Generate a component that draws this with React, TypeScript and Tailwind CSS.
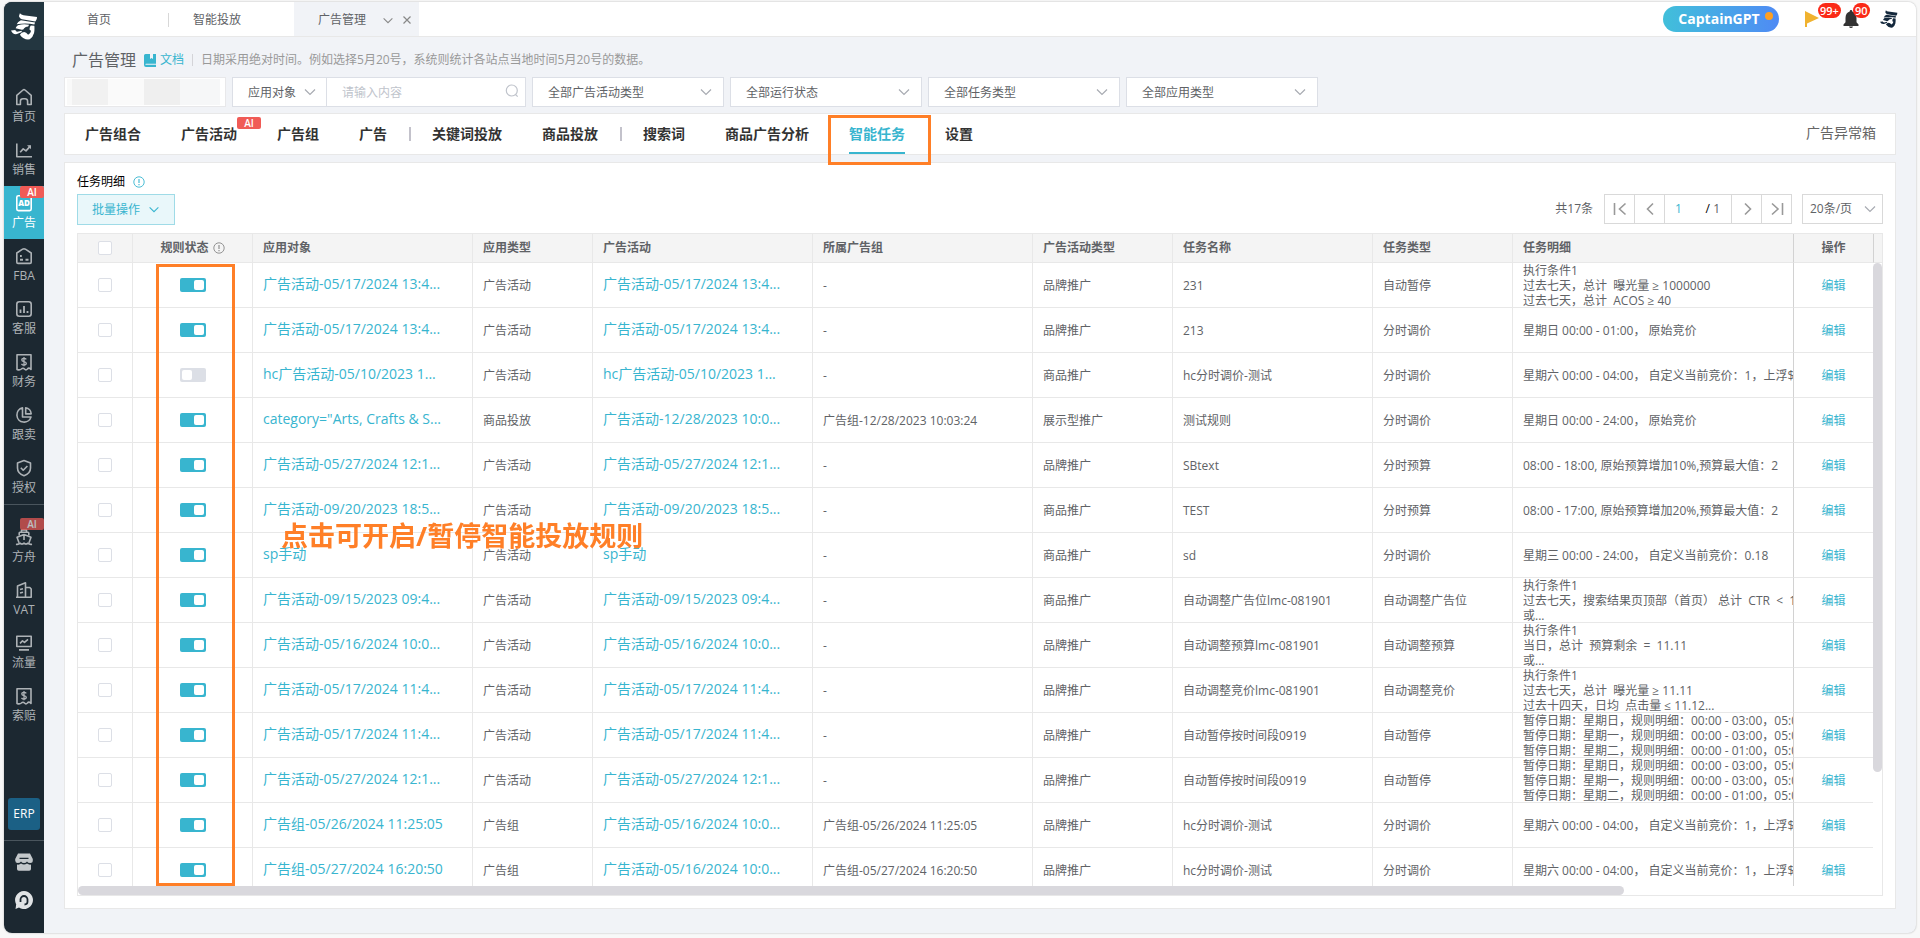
import { useState } from "react";
import type { ReactNode } from "react";
import clsx from "clsx";

interface TaskRow {
  enabled: boolean;
  target: string;
  targetType: string;
  campaign: string;
  adGroup: string;
  campaignType: string;
  taskName: string;
  taskType: string;
  details: string[];
}

const CONDITION = "执行条件1";

const PAUSE_DETAILS = [
  "暂停日期：星期日，规则明细：00:00 - 03:00，05:0",
  "暂停日期：星期一，规则明细：00:00 - 03:00，05:0",
  "暂停日期：星期二，规则明细：00:00 - 01:00，05:0",
];

const SATURDAY_DETAILS = ["星期六 00:00 - 04:00， 自定义当前竞价：1，上浮$1"];

function makeRow(
  target: string,
  targetType: string,
  campaign: string,
  adGroup: string,
  campaignType: string,
  taskName: string,
  taskType: string,
  details: string[],
  enabled = true,
): TaskRow {
  return { enabled, target, targetType, campaign, adGroup, campaignType, taskName, taskType, details };
}

const initialRows: TaskRow[] = [
  makeRow("广告活动-05/17/2024 13:4...", "广告活动", "广告活动-05/17/2024 13:4...", "-", "品牌推广", "231", "自动暂停", [
    CONDITION,
    "过去七天，总计  曝光量 ≥ 1000000",
    "过去七天，总计  ACOS ≥ 40",
  ]),
  makeRow("广告活动-05/17/2024 13:4...", "广告活动", "广告活动-05/17/2024 13:4...", "-", "品牌推广", "213", "分时调价", [
    "星期日 00:00 - 01:00， 原始竞价",
  ]),
  makeRow("hc广告活动-05/10/2023 1...", "广告活动", "hc广告活动-05/10/2023 1...", "-", "商品推广", "hc分时调价-测试", "分时调价", SATURDAY_DETAILS, false),
  makeRow('category="Arts, Crafts & S...', "商品投放", "广告活动-12/28/2023 10:0...", "广告组-12/28/2023 10:03:24", "展示型推广", "测试规则", "分时调价", [
    "星期日 00:00 - 24:00， 原始竞价",
  ]),
  makeRow("广告活动-05/27/2024 12:1...", "广告活动", "广告活动-05/27/2024 12:1...", "-", "品牌推广", "SBtext", "分时预算", [
    "08:00 - 18:00, 原始预算增加10%,预算最大值：2",
  ]),
  makeRow("广告活动-09/20/2023 18:5...", "广告活动", "广告活动-09/20/2023 18:5...", "-", "商品推广", "TEST", "分时预算", [
    "08:00 - 17:00, 原始预算增加20%,预算最大值：2",
  ]),
  makeRow("sp手动", "广告活动", "sp手动", "-", "商品推广", "sd", "分时调价", [
    "星期三 00:00 - 24:00， 自定义当前竞价：0.18",
  ]),
  makeRow("广告活动-09/15/2023 09:4...", "广告活动", "广告活动-09/15/2023 09:4...", "-", "商品推广", "自动调整广告位lmc-081901", "自动调整广告位", [
    CONDITION,
    "过去七天，搜索结果页顶部（首页） 总计  CTR  <  11.11%",
    "或...",
  ]),
  makeRow("广告活动-05/16/2024 10:0...", "广告活动", "广告活动-05/16/2024 10:0...", "-", "品牌推广", "自动调整预算lmc-081901", "自动调整预算", [
    CONDITION,
    "当日，总计  预算剩余  =  11.11",
    "或...",
  ]),
  makeRow("广告活动-05/17/2024 11:4...", "广告活动", "广告活动-05/17/2024 11:4...", "-", "品牌推广", "自动调整竞价lmc-081901", "自动调整竞价", [
    CONDITION,
    "过去七天，总计  曝光量 ≥ 11.11",
    "过去十四天，日均  点击量 ≤ 11.12...",
  ]),
  makeRow("广告活动-05/17/2024 11:4...", "广告活动", "广告活动-05/17/2024 11:4...", "-", "品牌推广", "自动暂停按时间段0919", "自动暂停", PAUSE_DETAILS),
  makeRow("广告活动-05/27/2024 12:1...", "广告活动", "广告活动-05/27/2024 12:1...", "-", "品牌推广", "自动暂停按时间段0919", "自动暂停", PAUSE_DETAILS),
  makeRow("广告组-05/26/2024 11:25:05", "广告组", "广告活动-05/16/2024 10:0...", "广告组-05/26/2024 11:25:05", "品牌推广", "hc分时调价-测试", "分时调价", SATURDAY_DETAILS),
  makeRow("广告组-05/27/2024 16:20:50", "广告组", "广告活动-05/16/2024 10:0...", "广告组-05/27/2024 16:20:50", "品牌推广", "hc分时调价-测试", "分时调价", SATURDAY_DETAILS),
];

function Icon({ children }: { children: ReactNode }) {
  return (
    <svg
      viewBox="0 0 18 18"
      className="h-[18px] w-[18px]"
      fill="none"
      stroke="currentColor"
      strokeWidth="1.6"
      strokeLinejoin="round"
    >
      {children}
    </svg>
  );
}

const receipt = (
  <Icon>
    <path d="M2 1.8h14v14.6c-1.4-1.6-2.6-1.6-3.6-.4-1 1.1-1.9 1.1-2.9 0s-2.1-1.1-3.1 0c-1.3 1.1-2.6 1.1-4.4.4z" />
    <path
      d="M11.3 6.4C10.8 5.6 10 5.3 9 5.3c-1.3 0-2.2.6-2.2 1.6 0 2.3 4.5 1 4.5 3.4 0 1-.9 1.7-2.3 1.7-1.2 0-2-.4-2.500-1.2M9 4v9.300"
      strokeWidth="1.3"
    />
  </Icon>
);

const sideItems: { label: string; icon: ReactNode; badge?: boolean }[] = [
  {
    label: "首页",
    icon: (
      <Icon>
        <path d="M1.8 7.4 8 2q1-.8 2 0l6.2 5.4v9.1h-3.6v-3.3a2.5 2.5 0 0 0-2.5-2.5H7.9a2.5 2.5 0 0 0-2.5 2.5v3.3H1.8z" />
      </Icon>
    ),
  },
  {
    label: "销售",
    icon: (
      <Icon>
        <path d="M1.8 2.500v13.2H17M5.2 11.3l3-3.4 2.8 2 4.5-5" />
        <path d="M12 4.2h4v4z" fill="currentColor" stroke="none" />
      </Icon>
    ),
  },
  {
    label: "广告",
    badge: true,
    icon: (
      <Icon>
        <rect x="1.8" y="1.8" width="14.4" height="14.8" rx="1.5" />
        <text
          x="9"
          y="12.4"
          textAnchor="middle"
          fill="currentColor"
          stroke="none"
          fontSize="8"
          fontWeight="800"
          fontFamily="Open Sans, sans-serif"
        >
          AD
        </text>
      </Icon>
    ),
  },
  {
    label: "FBA",
    icon: (
      <Icon>
        <path d="M1.8 6 7.6 2.2q1.4-.8 2.8 0L16.2 6v9.200q0 1.200-1.200 1.200H3q-1.200 0-1.200-1.200z" />
        <path d="M5 9h1.800M5 12.700h3M10.500 12.700h3" strokeWidth="2" />
      </Icon>
    ),
  },
  {
    label: "客服",
    icon: (
      <Icon>
        <rect x="1.8" y="1.8" width="14.4" height="14.4" rx="2.5" />
        <path d="M5.5 9.5V13M9 6v7M12.5 11v2" strokeWidth="1.8" />
      </Icon>
    ),
  },
  { label: "财务", icon: receipt },
  {
    label: "跟卖",
    icon: (
      <Icon>
        <path d="M7.5 1.9A7.2 7.2 0 1 0 16 11H7.5z" />
        <path d="M10.7 1.9a6.3 6.3 0 0 1 5.5 6h-5.500z" />
      </Icon>
    ),
  },
  {
    label: "授权",
    icon: (
      <Icon>
        <path d="M9 1.5 15.5 4v5c0 4-3 6.5-6.5 7.8C5.5 15.5 2.5 13 2.5 9V4z" />
        <path d="m5.8 8.8 2.4 2.4 4.2-4.2" />
      </Icon>
    ),
  },
  {
    label: "方舟",
    badge: true,
    icon: (
      <Icon>
        <path d="M4.2 7.5V5q0-.8.8-.8h8q.8 0 .8.800v2.500M6.500 4V2h5v2" />
        <path d="M9 6.500 2 9.300l2 5.500M9 6.500l7 2.800-2 5.500M9 6.800V12" />
        <path d="M1 16.200q2.200.6 4-1 2 1.800 4 0 2 1.800 4 0 1.800 1.600 4 1" />
      </Icon>
    ),
  },
  {
    label: "VAT",
    icon: (
      <Icon>
        <path d="M2.5 16.2V5l8-3.2v14.400M10.500 6.500h4.300l1.400 1.500v8.200H1M5 8.500l3-.8M5 12l3-.8" />
      </Icon>
    ),
  },
  {
    label: "流量",
    icon: (
      <Icon>
        <path d="M1.8 2.300h14.400v10.200H1.800zM4 15.900h10" />
        <path d="m5 9.300 2.500-2.400 2 1.500L13 5.300" />
      </Icon>
    ),
  },
  { label: "索赔", icon: receipt },
];

// captain's head in profile: peaked cap, pipe and beard
function CaptainLogo({ className }: { className?: string }) {
  return (
    <svg viewBox="8 7 82 82" className={className} fill="currentColor">
      <path d="M35 8q4 5 11 6l41 5q1 7-5 14L41 26q-6-2-9-9z" />
      <path d="M38 29l43 7-2 6q-24-6-54-1 4-8 13-12z" />
      <path d="M29 44q18-5 34-1l-3 5q-8 0-12 5-2 5-7 5l-19-5q1-5 7-9z" />
      <path d="M8 60l13-1q2 5 6 5l13-3 1 4-15 6q-13 2-18-11z" />
      <path d="M68 45l11 1q1 12-1 22-3 12-13 19-18 3-30-14 4-8 13-8 6 0 12 8 8-4 9-12l-4-2q-2-7 3-14z" />
    </svg>
  );
}

function Chevron({ className }: { className?: string }) {
  return (
    <svg
      viewBox="0 0 12 8"
      className={clsx("pointer-events-none h-2 w-3", className)}
      fill="none"
      stroke="currentColor"
      strokeWidth="1.2"
    >
      <path d="M1 1.5 6 6.5l5-5" />
    </svg>
  );
}

function InfoIcon({ className }: { className?: string }) {
  return (
    <svg viewBox="0 0 12 12" className={clsx("h-3 w-3", className)} fill="none" stroke="currentColor">
      <circle cx="6" cy="6" r="5.2" strokeWidth="0.9" />
      <path d="M6 3v4M6 8v1.2" strokeWidth="1.1" />
    </svg>
  );
}

function AiBadge({ className }: { className?: string }) {
  return (
    <span
      className={clsx(
        "absolute flex h-3 w-6 items-center justify-center rounded-[2px] bg-[#f05b56] text-[10px] leading-3 font-semibold text-white",
        className,
      )}
    >
      AI
    </span>
  );
}

function FilterSelect({ label }: { label: string }) {
  return (
    <div className="relative w-48">
      <select
        aria-label={label}
        className="h-[30px] w-full appearance-none border border-[#dcdfe6] bg-white pt-0.5 pr-8 pl-[15px] text-xs text-[#606266] outline-none"
      >
        <option>{label}</option>
      </select>
      <Chevron className="absolute top-[11px] right-3 text-[#a8abb2]" />
    </div>
  );
}

function SideNav() {
  return (
    <aside className="flex w-10 shrink-0 flex-col bg-[#1c2831] text-[#adb2b6]">
      <div className="flex h-12 shrink-0 items-center justify-center bg-[#233640] text-white">
        <CaptainLogo className="h-[27px] w-[27px]" />
      </div>
      <nav className="pt-[30px]">
        {sideItems.map(({ label, icon, badge }, index) => (
          <a
            key={label}
            href="#"
            className={clsx(
              "relative flex h-[53px] flex-col items-center pt-2 text-xs leading-[18px]",
              index === 2 && "bg-[#38b5cf] text-white",
              index === 8 && "mt-4",
            )}
          >
            {index === 8 && <span className="absolute inset-x-0 -top-4 h-px bg-[#4a555d]" />}
            {icon}
            <span className="mt-0.5">{label}</span>
            {badge && <AiBadge className={clsx("right-0", index === 2 ? "top-0" : "-top-0.5 opacity-70")} />}
          </a>
        ))}
      </nav>
      <div className="mt-auto flex flex-col items-center pb-6">
        <a href="#" className="flex h-8 w-8 items-center justify-center rounded-[3px] bg-[#1b6085] text-xs text-white">
          ERP
        </a>
        <span className="mt-2.5 h-px w-full bg-[#4a555d]" />
        <a href="#" aria-label="店铺" className="mt-3 text-[#c3c8cb]">
          <svg viewBox="0 0 18 18" className="h-[18px] w-[18px]" fill="currentColor">
            <path d="M3 .5h12l2.800 5.500v1.500q0 2.500-2.500 2.500T12 8.500Q11 10 9 10T6 8.500Q5 10 2.700 10T.2 7.500V6z" />
            <path d="M2 11.500q2.500.5 4-1 3 2 6 0 2 1.500 4 1V16q0 1.800-1.800 1.800H3.800Q2 17.800 2 16z" />
            <path d="M4.500 5.300h9" stroke="#1c2831" strokeWidth="1.2" />
          </svg>
        </a>
        <a href="#" aria-label="在线客服" className="mt-5 text-[#e0e3e5]">
          <svg viewBox="0 0 18 18" className="h-[18px] w-[18px]">
            <path d="M9 0a9 9 0 1 1-5 16.500L.5 18l.7-4.600A9 9 0 0 1 9 0z" fill="currentColor" />
            <path d="M5.500 11V8.500a3.500 3.500 0 0 1 7 0V11q-.2 2.500-3 2.500" fill="none" stroke="#1c2831" strokeWidth="1.8" />
          </svg>
        </a>
      </div>
    </aside>
  );
}

function TopBar() {
  return (
    <header className="flex h-[35px] shrink-0 items-stretch justify-between border-b border-[#e8e8e8] bg-white text-xs text-[#606266]">
      <div className="flex">
        <a href="#" className="flex w-[125px] items-center pt-0.5 pl-[43px]">
          首页
          <span className="ml-auto h-3.5 w-px bg-[#d8d8d8]" />
        </a>
        <a href="#" className="flex w-[125px] items-center pt-0.5 pl-6">
          智能投放
        </a>
        <div className="flex w-[125px] items-center bg-[#f1f3f7] pt-0.5 pl-6">
          广告管理
          <Chevron className="ml-4 h-[7px] w-2.5 text-[#888]" />
          <button type="button" aria-label="关闭" className="ml-2">
            <svg viewBox="0 0 10 10" className="h-2.5 w-2.5" stroke="#888" strokeWidth="1.2">
              <path d="m1.500 1.500 7 7M8.500 1.500l-7 7" />
            </svg>
          </button>
        </div>
      </div>
      <div className="flex items-center pr-[18px]">
        <button
          type="button"
          className="relative mr-[26px] h-[26px] w-[116px] rounded-full bg-linear-to-r from-[#41bfda] to-[#4f8af4] pr-1 text-sm font-bold text-white"
        >
          CaptainGPT
          <span className="absolute top-1.5 right-1.5 h-2 w-2 rounded-full bg-[#ff9f20]" />
        </button>
        <button type="button" aria-label="标记" className="relative mr-6">
          <svg viewBox="0 0 14 16" className="h-4 w-3.5" fill="#f0b22f">
            <path d="M0 0l14 7L2 12.500V16H0z" />
          </svg>
          <span className="absolute -top-2 left-[13px] rounded-full bg-[#fb2a17] px-0.5 text-[11px] leading-[15px] font-semibold text-white">
            99+
          </span>
        </button>
        <button type="button" aria-label="通知" className="relative mr-[21px]">
          <svg viewBox="0 0 16 18" className="h-[18px] w-4" fill="#333">
            <path d="M8 0q1.300 0 1.300 1.400Q13.500 2.700 13.500 8v4.200l2 2.300V16H.5v-1.500l2-2.300V8q0-5.300 4.200-6.600Q6.700 0 8 0zM6 16.500h4Q9.600 18 8 18t-2-1.500z" />
          </svg>
          <span className="absolute -top-[7px] left-2.5 rounded-full bg-[#fb2a17] px-0.5 text-[11px] leading-[15px] font-semibold text-white">
            90
          </span>
        </button>
        <CaptainLogo className="h-[18px] w-[18px] text-[#14283c]" />
      </div>
    </header>
  );
}

function Filters() {
  return (
    <div className="flex gap-1.5">
      <button
        type="button"
        aria-label="店铺选择"
        className="flex h-[30px] w-[162px] border border-[#e8e8ea] bg-white py-px pr-[5px] pl-0.5"
      >
        <span className="h-full w-[5px] bg-[#f9f9f9]" />
        <span className="h-full w-9 bg-[#f1f1f1]" />
        <span className="h-full w-9 bg-[#fafafa]" />
        <span className="h-full w-9 bg-[#efefef]" />
        <span className="h-full flex-1 bg-[#f6f7f8]" />
      </button>
      <div className="flex h-[30px] w-[294px] border border-[#dcdfe6] bg-white">
        <div className="relative w-[94px] border-r border-[#dcdfe6]">
          <select
            aria-label="搜索字段"
            className="h-full w-full appearance-none bg-white pt-0.5 pl-[15px] text-xs text-[#606266] outline-none"
          >
            <option>应用对象</option>
          </select>
          <Chevron className="absolute top-2.5 right-2.5 text-[#a8abb2]" />
        </div>
        <input
          type="text"
          aria-label="搜索内容"
          placeholder="请输入内容"
          className="min-w-0 flex-1 pt-0.5 pr-4 pl-[15px] text-xs outline-none placeholder:text-[#c0c4cc]"
        />
        <svg
          viewBox="0 0 14 14"
          className="mt-1.5 mr-1.5 h-3.5 w-3.5"
          fill="none"
          stroke="#bfc3cb"
          strokeWidth="1.2"
        >
          <circle cx="6.8" cy="6.5" r="5.5" />
          <path d="m10.500 10.500 2.200 2.200" />
        </svg>
      </div>
      <FilterSelect label="全部广告活动类型" />
      <FilterSelect label="全部运行状态" />
      <FilterSelect label="全部任务类型" />
      <FilterSelect label="全部应用类型" />
    </div>
  );
}

const tabs = [
  "广告组合",
  "广告活动",
  "广告组",
  "广告",
  "|",
  "关键词投放",
  "商品投放",
  "|",
  "搜索词",
  "商品广告分析",
  "智能任务",
  "设置",
];

function AdTabs() {
  return (
    <div className="mt-1.5 flex h-[42px] items-stretch border border-[#e8e8e8] bg-white text-sm">
      {tabs.map((tab, index) =>
        tab === "|" ? (
          <span key={index} className="flex w-[5px] items-center justify-center">
            <span className="h-3.5 w-0.5 bg-[#c3c2cb]" />
          </span>
        ) : (
          <button key={tab} type="button" className="relative px-5 font-bold text-[#333]">
            <span
              className={clsx(
                "flex h-full items-center",
                tab === "智能任务" && "border-b-2 border-[#38b5cf] pt-0.5 text-[#38b5cf]",
              )}
            >
              {tab}
            </span>
            {tab === "广告活动" && <AiBadge className="top-[3px] -right-1" />}
            {tab === "智能任务" && (
              <span className="absolute top-px -left-px z-10 h-[50px] w-[103px] border-3 border-[#ff7f27]" />
            )}
          </button>
        ),
      )}
      <a href="#" className="ml-auto flex items-center pr-[19px] pb-0.5 text-[#666]">
        广告异常箱
      </a>
    </div>
  );
}

function PagerButton({ label, path }: { label: string; path: string }) {
  return (
    <button
      type="button"
      aria-label={label}
      className="-ml-px flex h-[30px] w-[31px] items-center justify-center border border-[#d9d9d9] bg-white"
    >
      <svg viewBox="0 0 14 14" className="h-3.5 w-3.5" fill="none" stroke="#999" strokeWidth="1.6">
        <path d={path} />
      </svg>
    </button>
  );
}

function Pagination() {
  return (
    <div className="flex items-center text-xs text-[#606266]">
      <span className="mr-3">共17条</span>
      <PagerButton label="首页" path="M1.500 1v12M12.500 1.500 6.500 7l6 5.500" />
      <PagerButton label="上一页" path="M10 1.500 4.500 7l5.500 5.500" />
      <div className="-ml-px flex h-[30px] w-[68px] items-center border border-[#d9d9d9] bg-white">
        <input
          type="text"
          aria-label="页码"
          defaultValue="1"
          className="w-[27px] text-center text-[#38b5cf] outline-none"
        />
        <span className="ml-auto pr-[11px]">
          <span className="text-black">/</span> 1
        </span>
      </div>
      <PagerButton label="下一页" path="M5 1.500 10.500 7 5 12.500" />
      <PagerButton label="末页" path="M2 1.500 8 7l-6 5.500M12.500 1v12" />
      <div className="relative ml-2.5">
        <select
          aria-label="每页条数"
          className="h-[30px] w-[81px] appearance-none border border-[#d9d9d9] bg-white pl-[7px] outline-none"
        >
          <option>20条/页</option>
        </select>
        <Chevron className="absolute top-[11px] right-[7px] text-[#a8abb2]" />
      </div>
    </div>
  );
}

const checkboxClass =
  "block mx-auto h-3.5 w-3.5 appearance-none rounded-[2px] border border-[#dcdfe6] bg-white checked:bg-[#38b5cf]";
const thClass = "sticky top-0 border-r border-b border-[#e8e8e8] bg-[#f4f4f4] px-2.5 text-left font-bold";
const tdClass = "border-r border-b border-[#e8e8e8] px-2.5";
const textTdClass = "border-r border-b border-[#e8e8e8] px-2.5 pt-0.5 whitespace-nowrap";
const linkTdClass = "border-r border-b border-[#e8e8e8] px-2.5 pb-0.5 whitespace-nowrap";
const linkClass = "text-sm text-[#38b5cf]";

function TaskTable() {
  const [rows, setRows] = useState(initialRows);

  const toggleRow = (index: number) => {
    setRows((prev) => prev.map((row, i) => (i === index ? { ...row, enabled: !row.enabled } : row)));
  };

  return (
    <div className="mt-2 flex min-h-0 flex-1 flex-col border border-[#e8e8e8]">
      <div className="flex min-h-0 flex-1">
        <div className="relative min-w-0 flex-1 overflow-hidden">
          <table className="w-[2084px] table-fixed border-separate border-spacing-0 text-xs text-[#606266]">
            <colgroup>
              <col className="w-[55px]" />
              <col className="w-[120px]" />
              <col className="w-[220px]" />
              <col className="w-[120px]" />
              <col className="w-[220px]" />
              <col className="w-[220px]" />
              <col className="w-[140px]" />
              <col className="w-[200px]" />
              <col className="w-[140px]" />
              <col />
              <col className="w-20" />
            </colgroup>
            <thead>
              <tr className="h-[29px]">
                <th className={thClass}>
                  <input type="checkbox" aria-label="全选" className={checkboxClass} />
                </th>
                <th className={thClass}>
                  <span className="flex items-center justify-center gap-1">
                    规则状态
                    <InfoIcon className="text-[#888]" />
                  </span>
                </th>
                <th className={thClass}>应用对象</th>
                <th className={thClass}>应用类型</th>
                <th className={thClass}>广告活动</th>
                <th className={thClass}>所属广告组</th>
                <th className={thClass}>广告活动类型</th>
                <th className={thClass}>任务名称</th>
                <th className={thClass}>任务类型</th>
                <th className={thClass}>任务明细</th>
                <th className="sticky top-0 right-0 border-b border-l border-b-[#e8e8e8] border-l-[#d2d2d2] bg-[#f4f4f4] text-center font-bold">
                  操作
                </th>
              </tr>
            </thead>
            <tbody>
              {rows.map((row, index) => (
                <tr key={index} className="h-[45px] bg-white">
                  <td className={tdClass}>
                    <input type="checkbox" aria-label={`选择 ${row.taskName}`} className={checkboxClass} />
                  </td>
                  <td className={tdClass}>
                    <input
                      type="checkbox"
                      role="switch"
                      aria-label={`启用 ${row.taskName}`}
                      checked={row.enabled}
                      onChange={() => toggleRow(index)}
                      className="relative mx-auto block h-3.5 w-[26px] appearance-none rounded-[2px] bg-[#dcdfe6] before:absolute before:top-0.5 before:left-0.5 before:h-2.5 before:w-2.5 before:rounded-[2px] before:bg-white checked:bg-[#38b5cf] checked:before:left-3.5"
                    />
                  </td>
                  <td className={linkTdClass}>
                    <a href="#" className={linkClass}>
                      {row.target}
                    </a>
                  </td>
                  <td className={textTdClass}>{row.targetType}</td>
                  <td className={linkTdClass}>
                    <a href="#" className={linkClass}>
                      {row.campaign}
                    </a>
                  </td>
                  <td className={textTdClass}>{row.adGroup}</td>
                  <td className={textTdClass}>{row.campaignType}</td>
                  <td className={textTdClass}>{row.taskName}</td>
                  <td className={textTdClass}>{row.taskType}</td>
                  <td className="border-r border-b border-[#e8e8e8] px-2.5 py-0">
                    <div className="flex h-11 flex-col justify-center overflow-hidden leading-[15px] whitespace-pre">
                      {row.details.map((line) => (
                        <span key={line}>{line}</span>
                      ))}
                    </div>
                  </td>
                  <td className="sticky right-0 border-b border-l border-b-[#e8e8e8] border-l-[#d2d2d2] bg-white pt-0.5 text-center">
                    <a href="#" className="text-[#38b5cf]">
                      编辑
                    </a>
                  </td>
                </tr>
              ))}
            </tbody>
          </table>
          <div className="pointer-events-none absolute top-[30px] bottom-0 left-[78px] w-[79px] border-3 border-[#ff7f27]" />
          <p className="pointer-events-none absolute top-[284px] left-[203px] text-[27px] leading-9 font-bold text-[#ff7f27]">
            点击可开启/暂停智能投放规则
          </p>
        </div>
        <div className="flex w-[9px] shrink-0 flex-col">
          <div className="h-[29px] shrink-0 border-b border-l border-b-[#e8e8e8] border-l-[#d2d2d2] bg-[#f4f4f4]" />
          <div className="h-[78%] rounded-full bg-[#d9d8dd]" />
        </div>
      </div>
      <div className="h-[9px] shrink-0">
        <div className="h-full w-6/7 rounded-full bg-[#d9d8dd]" />
      </div>
    </div>
  );
}

export default function App() {
  return (
    <div className="h-screen bg-[#f8f8f8] px-1 pt-0.5 pb-[5px] font-['Open_Sans','Noto_Sans_CJK_SC',sans-serif]">
      <div className="flex h-full overflow-hidden rounded-lg bg-[#f1f3f7] shadow-[0_0_2px_rgba(0,0,0,0.3)]">
        <SideNav />
        <div className="flex min-w-0 flex-1 flex-col">
          <TopBar />
          <main className="flex min-h-0 flex-1 flex-col px-5 pb-6">
            <div className="flex h-10 shrink-0 items-center pt-1.5 pl-2 text-xs text-[#999]">
              <h1 className="text-base text-[#606266]">广告管理</h1>
              <a href="#" className="ml-2 flex items-center gap-1 text-[#38b5cf]">
                <svg viewBox="0 0 12 13" className="h-[13px] w-3" fill="currentColor">
                  <path d="M1.500 0H6v5l1.500-1L9 5V0h3v9.800H2q-.6 0-.6.500t.6.500h10V13H2q-2 0-2-2V1.500Q0 0 1.500 0z" />
                </svg>
                文档
              </a>
              <span className="mx-2 h-3 w-px bg-[#d4d4d8]" />
              <p>日期采用绝对时间。例如选择5月20号，系统则统计各站点当地时间5月20号的数据。</p>
            </div>
            <Filters />
            <AdTabs />
            <section className="mt-[7px] flex min-h-0 flex-1 flex-col border border-[#e8e8e8] bg-white px-3 pt-2 pb-3">
              <h2 className="flex h-5 items-center gap-2 pt-0.5 text-xs text-black">
                任务明细
                <InfoIcon className="text-[#38b5cf]" />
              </h2>
              <div className="mt-[3px] flex items-start justify-between">
                <button
                  type="button"
                  className="flex h-[31px] w-[98px] items-center gap-4 border border-[#9fdbe7] bg-[#e9f7fa] pl-3.5 text-xs text-[#38b5cf]"
                >
                  批量操作
                  <Chevron className="-ml-2 h-[7px] w-2.5" />
                </button>
                <Pagination />
              </div>
              <TaskTable />
            </section>
          </main>
        </div>
      </div>
    </div>
  );
}
